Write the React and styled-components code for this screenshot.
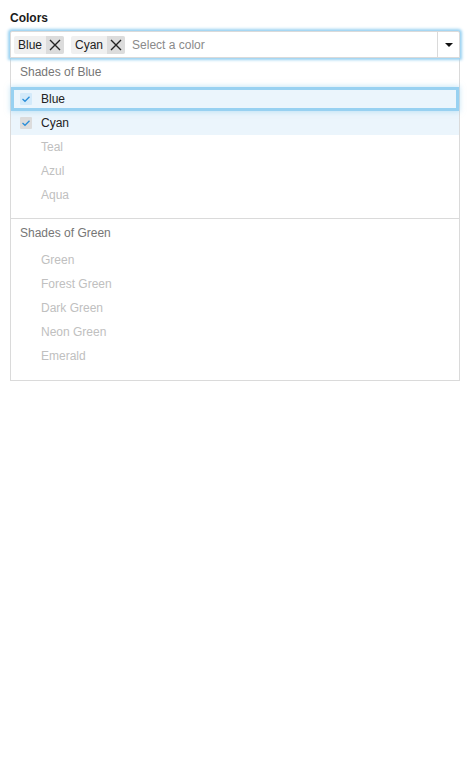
import styled, { createGlobalStyle } from "styled-components";

const GlobalStyle = createGlobalStyle`
  body {
    margin: 0;
    font-family: "Liberation Sans", Arial, sans-serif;
    font-size: 12px;
    color: #222;
    background: #fff;
  }
`;

const Page = styled.div`
  padding: 10px 10px;
  width: 450px;
`;

const Label = styled.div`
  font-weight: bold;
  font-size: 12px;
  line-height: 16px;
  margin-bottom: 5px;
  color: #1b1b1b;
`;

const Field = styled.div`
  display: flex;
  align-items: stretch;
  height: 27px;
  box-sizing: border-box;
  border: 1px solid #dadada;
  border-radius: 2px 2px 0 0;
  box-shadow: 0 0 3px 2px #98d1f1;
  background: #fff;
  position: relative;
  z-index: 1;
`;

const Tags = styled.div`
  flex: 1;
  display: flex;
  align-items: center;
  gap: 7px;
  padding-left: 3px;
`;

const Chip = styled.div`
  display: flex;
  align-items: stretch;
  height: 18px;
  background: #f0f0f0;
  border-radius: 2px;
  font-size: 12px;
  color: #222;
`;

const ChipText = styled.span`
  display: flex;
  align-items: center;
  padding: 0 4px;
`;

const ChipRemove = styled.span`
  display: flex;
  align-items: center;
  justify-content: center;
  width: 18px;
  background: #dcdcdc;
  border-radius: 0 2px 2px 0;
`;

const Placeholder = styled.span`
  color: #8a8a8a;
`;

const ArrowButton = styled.div`
  width: 21px;
  border-left: 1px solid #dadada;
  display: flex;
  align-items: center;
  justify-content: center;
`;

const Popup = styled.div`
  border: 1px solid #dadada;
  border-top: none;
  background: #fff;
`;

const Group = styled.div`
  padding-bottom: 11px;
  & + & {
    border-top: 1px solid #dadada;
  }
  &:last-child {
    padding-bottom: 12px;
  }
`;

const GroupHeader = styled.div`
  height: 29px;
  line-height: 29px;
  padding-left: 9px;
  color: #767676;
  font-size: 12px;
`;

const Item = styled.div`
  display: flex;
  align-items: center;
  height: 24px;
  padding-left: 9px;
  gap: 9px;
  font-size: 12px;
  color: ${(p) => (p.$disabled ? "#c0c0c0" : "#222")};
  background: ${(p) => (p.$selected ? "#ebf5fc" : "transparent")};
  box-shadow: ${(p) =>
    p.$focused ? "inset 0 0 0 3px #98d1f1, 0 0 5px 1px rgba(152,209,241,0.5)" : "none"};
  position: relative;
  z-index: ${(p) => (p.$focused ? 1 : 0)};
`;

const Check = styled.span`
  width: 12px;
  height: 12px;
  border-radius: 1px;
  display: flex;
  align-items: center;
  justify-content: center;
  background: ${(p) => (p.$focused ? "#d3eafa" : "#dcdcdc")};
  visibility: ${(p) => (p.$checked ? "visible" : "hidden")};
`;

const XIcon = () => (
  <svg width="12" height="12" viewBox="0 0 12 12">
    <path d="M1 1 L11 11 M11 1 L1 11" stroke="#222" strokeWidth="1.4" />
  </svg>
);

const CheckIcon = () => (
  <svg width="10" height="10" viewBox="0 0 10 10">
    <path d="M1.5 5 L4 7.3 L8.5 2.8" stroke="#2a8ed8" strokeWidth="1.3" fill="none" />
  </svg>
);

const groups = [
  {
    title: "Shades of Blue",
    items: [
      { name: "Blue", checked: true, focused: true },
      { name: "Cyan", checked: true },
      { name: "Teal", disabled: true },
      { name: "Azul", disabled: true },
      { name: "Aqua", disabled: true },
    ],
  },
  {
    title: "Shades of Green",
    items: [
      { name: "Green", disabled: true },
      { name: "Forest Green", disabled: true },
      { name: "Dark Green", disabled: true },
      { name: "Neon Green", disabled: true },
      { name: "Emerald", disabled: true },
    ],
  },
];

export default function App() {
  return (
    <Page>
      <GlobalStyle />
      <Label>Colors</Label>
      <Field>
        <Tags>
          {["Blue", "Cyan"].map((t) => (
            <Chip key={t}>
              <ChipText>{t}</ChipText>
              <ChipRemove>
                <XIcon />
              </ChipRemove>
            </Chip>
          ))}
          <Placeholder>Select a color</Placeholder>
        </Tags>
        <ArrowButton>
          <svg width="8" height="4" viewBox="0 0 8 4">
            <path d="M0 0 H8 L4 4 Z" fill="#111" />
          </svg>
        </ArrowButton>
      </Field>
      <Popup>
        {groups.map((g) => (
          <Group key={g.title}>
            <GroupHeader>{g.title}</GroupHeader>
            {g.items.map((it) => (
              <Item
                key={it.name}
                $disabled={it.disabled}
                $selected={it.checked}
                $focused={it.focused}
              >
                <Check $checked={it.checked} $focused={it.focused}>
                  <CheckIcon />
                </Check>
                {it.name}
              </Item>
            ))}
          </Group>
        ))}
      </Popup>
    </Page>
  );
}
